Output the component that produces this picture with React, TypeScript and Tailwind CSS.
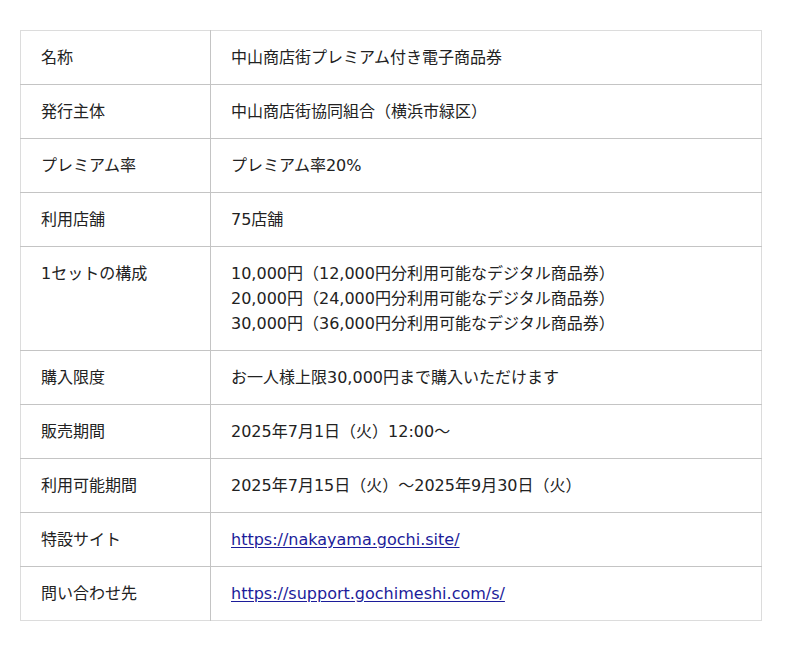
const rows: { label: string; value: React.ReactNode }[] = [
  { label: "名称", value: "中山商店街プレミアム付き電子商品券" },
  { label: "発行主体", value: "中山商店街協同組合（横浜市緑区）" },
  { label: "プレミアム率", value: "プレミアム率20%" },
  { label: "利用店舗", value: "75店舗" },
  {
    label: "1セットの構成",
    value: (
      <>
        10,000円（12,000円分利用可能なデジタル商品券）
        <br />
        20,000円（24,000円分利用可能なデジタル商品券）
        <br />
        30,000円（36,000円分利用可能なデジタル商品券）
      </>
    ),
  },
  { label: "購入限度", value: "お一人様上限30,000円まで購入いただけます" },
  { label: "販売期間", value: "2025年7月1日（火）12:00～" },
  { label: "利用可能期間", value: "2025年7月15日（火）～2025年9月30日（火）" },
  {
    label: "特設サイト",
    value: (
      <a href="#" className="text-[#1c1c9a] underline underline-offset-2">
        https://nakayama.gochi.site/
      </a>
    ),
  },
  {
    label: "問い合わせ先",
    value: (
      <a href="#" className="text-[#1c1c9a] underline underline-offset-2">
        https://support.gochimeshi.com/s/
      </a>
    ),
  },
];

export default function App() {
  return (
    <div
      className="min-h-[651px] bg-white pt-[30px] pl-5 text-[16px] leading-[25px] text-[#222]"
      style={{ fontFamily: '"DejaVu Sans", "Noto Sans CJK JP", sans-serif' }}
    >
      <table className="w-[742px] border-collapse border border-[#dcdcdc]">
        <tbody>
          {rows.map((r, i) => (
            <tr
              key={r.label}
              className={i > 0 ? "border-t border-[#c4c4c4]" : ""}
            >
              <td className="w-[190px] border-r border-[#c4c4c4] px-5 py-[14px] align-top">
                {r.label}
              </td>
              <td className="px-5 py-[14px] align-top">{r.value}</td>
            </tr>
          ))}
        </tbody>
      </table>
    </div>
  );
}
